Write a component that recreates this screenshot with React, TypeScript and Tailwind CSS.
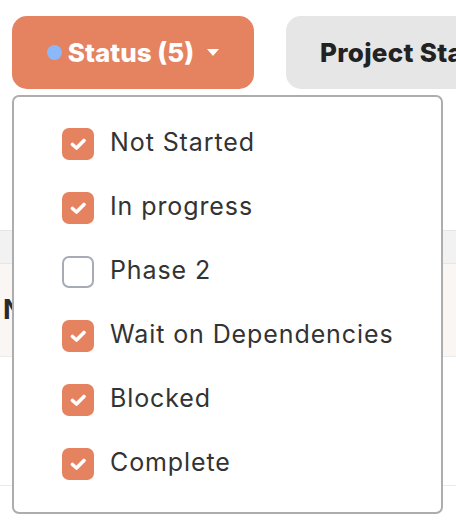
import React from "react";

const items = [
  { label: "Not Started", checked: true },
  { label: "In progress", checked: true },
  { label: "Phase 2", checked: false },
  { label: "Wait on Dependencies", checked: true },
  { label: "Blocked", checked: true },
  { label: "Complete", checked: true },
];

function Check() {
  return (
    <svg width="17" height="14" viewBox="0 0 17 14" fill="none">
      <path d="M2.5 7.5 L6.5 11 L14 3.5" stroke="white" strokeWidth="3.6" strokeLinecap="round" strokeLinejoin="round" />
    </svg>
  );
}

export default function App() {
  return (
    <div className="relative w-[456px] h-[530px] overflow-hidden bg-white" style={{ fontFamily: "Inter, 'Liberation Sans', sans-serif" }}>
      <div className="flex gap-[32px] pl-[12px] pt-[16px]">
        <button className="flex h-[73px] w-[242px] shrink-0 items-center justify-center rounded-[15px] bg-[#e5825f] text-white">
          <span className="h-[15px] w-[15px] rounded-full bg-[#8ab8f8]" />
          <span className="ml-[6px] text-[26px] font-extrabold leading-none">Status (5)</span>
          <span className="ml-[13px] h-0 w-0 border-l-[6.5px] border-r-[6.5px] border-t-[7px] border-l-transparent border-r-transparent border-t-white" />
        </button>
        <button className="flex h-[73px] w-[290px] shrink-0 items-center rounded-[15px] bg-[#e6e6e6] pl-[34px] text-[#222]">
          <span className="whitespace-nowrap text-[26px] font-extrabold leading-none tracking-[0.3px]">Project Status</span>
        </button>
      </div>

      <div className="mt-[141px]">
        <div className="h-[34px] border-y border-[#e6e6e6] bg-[#f2f2f2]" />
        <div className="flex h-[93px] items-center border-b border-[#ebebeb] bg-[#faf6f3] pl-[3px]">
          <span className="text-[27px] font-bold text-[#2a2a2a]">Name</span>
        </div>
        <div className="h-[129px] border-b border-[#ebebeb]" />
      </div>

      <div className="absolute left-[12px] top-[95px] h-[419px] w-[431px] rounded-[7px] border-2 border-[#adadad] bg-white pt-[15px] pl-[48px]">
        {items.map((it) => (
          <div key={it.label} className="flex h-[64px] items-center gap-[16px]">
            {it.checked ? (
              <div className="flex h-[32px] w-[32px] items-center justify-center rounded-[7px] bg-[#e5825f]">
                <Check />
              </div>
            ) : (
              <div className="h-[32px] w-[32px] rounded-[7px] border-2 border-[#a6abb5] bg-white" />
            )}
            <span className="pb-[4px] text-[25px] leading-none tracking-[0.9px] text-[#333]">{it.label}</span>
          </div>
        ))}
      </div>
    </div>
  );
}
